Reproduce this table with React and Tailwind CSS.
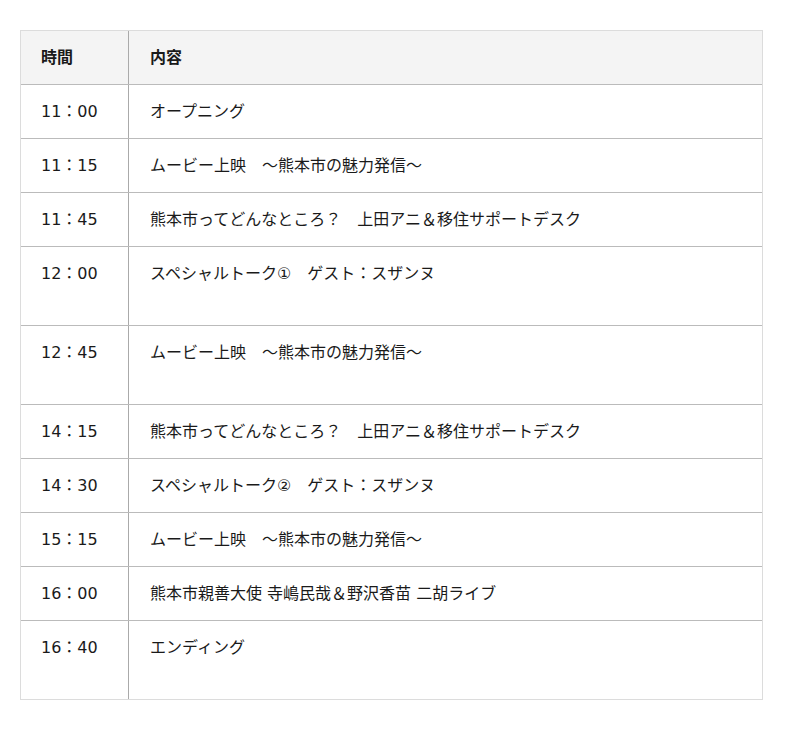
export default function App() {
  const rows = [
    ["11：00", "オープニング", false],
    ["11：15", "ムービー上映　～熊本市の魅力発信～", false],
    ["11：45", "熊本市ってどんなところ？　上田アニ＆移住サポートデスク", false],
    ["12：00", "スペシャルトーク①　ゲスト：スザンヌ", true],
    ["12：45", "ムービー上映　～熊本市の魅力発信～", true],
    ["14：15", "熊本市ってどんなところ？　上田アニ＆移住サポートデスク", false],
    ["14：30", "スペシャルトーク②　ゲスト：スザンヌ", false],
    ["15：15", "ムービー上映　～熊本市の魅力発信～", false],
    ["16：00", "熊本市親善大使 寺嶋民哉＆野沢香苗 二胡ライブ", false],
    ["16：40", "エンディング", true],
  ];
  return (
    <div
      className="bg-white min-h-[730px] pt-[30px] pl-[20px] text-[16px] leading-[24px] text-[#1a1a1a]"
      style={{ fontFamily: '"DejaVu Sans", "Noto Sans CJK JP", sans-serif' }}
    >
      <div className="w-[743px] border border-[#dcdcdc]">
        <div className="flex h-[54px] border-b border-[#bbb] bg-[#f4f4f4] font-bold">
          <div className="w-[108px] shrink-0 border-r border-[#aaa] pl-[20px] pt-[15px]">時間</div>
          <div className="flex-1 pl-[21px] pt-[15px]">内容</div>
        </div>
        {rows.map(([t, c, tall], i) => {
          const last = i === rows.length - 1;
          const cls = last
            ? "flex h-[78px]"
            : tall
            ? "flex h-[79px] border-b border-[#bbb]"
            : "flex h-[54px] border-b border-[#bbb]";
          return (
            <div key={i} className={cls}>
              <div className="w-[108px] shrink-0 border-r border-[#aaa] pl-[20px] pt-[15px]">{t}</div>
              <div className="flex-1 pl-[21px] pt-[15px]">{c}</div>
            </div>
          );
        })}
      </div>
    </div>
  );
}
